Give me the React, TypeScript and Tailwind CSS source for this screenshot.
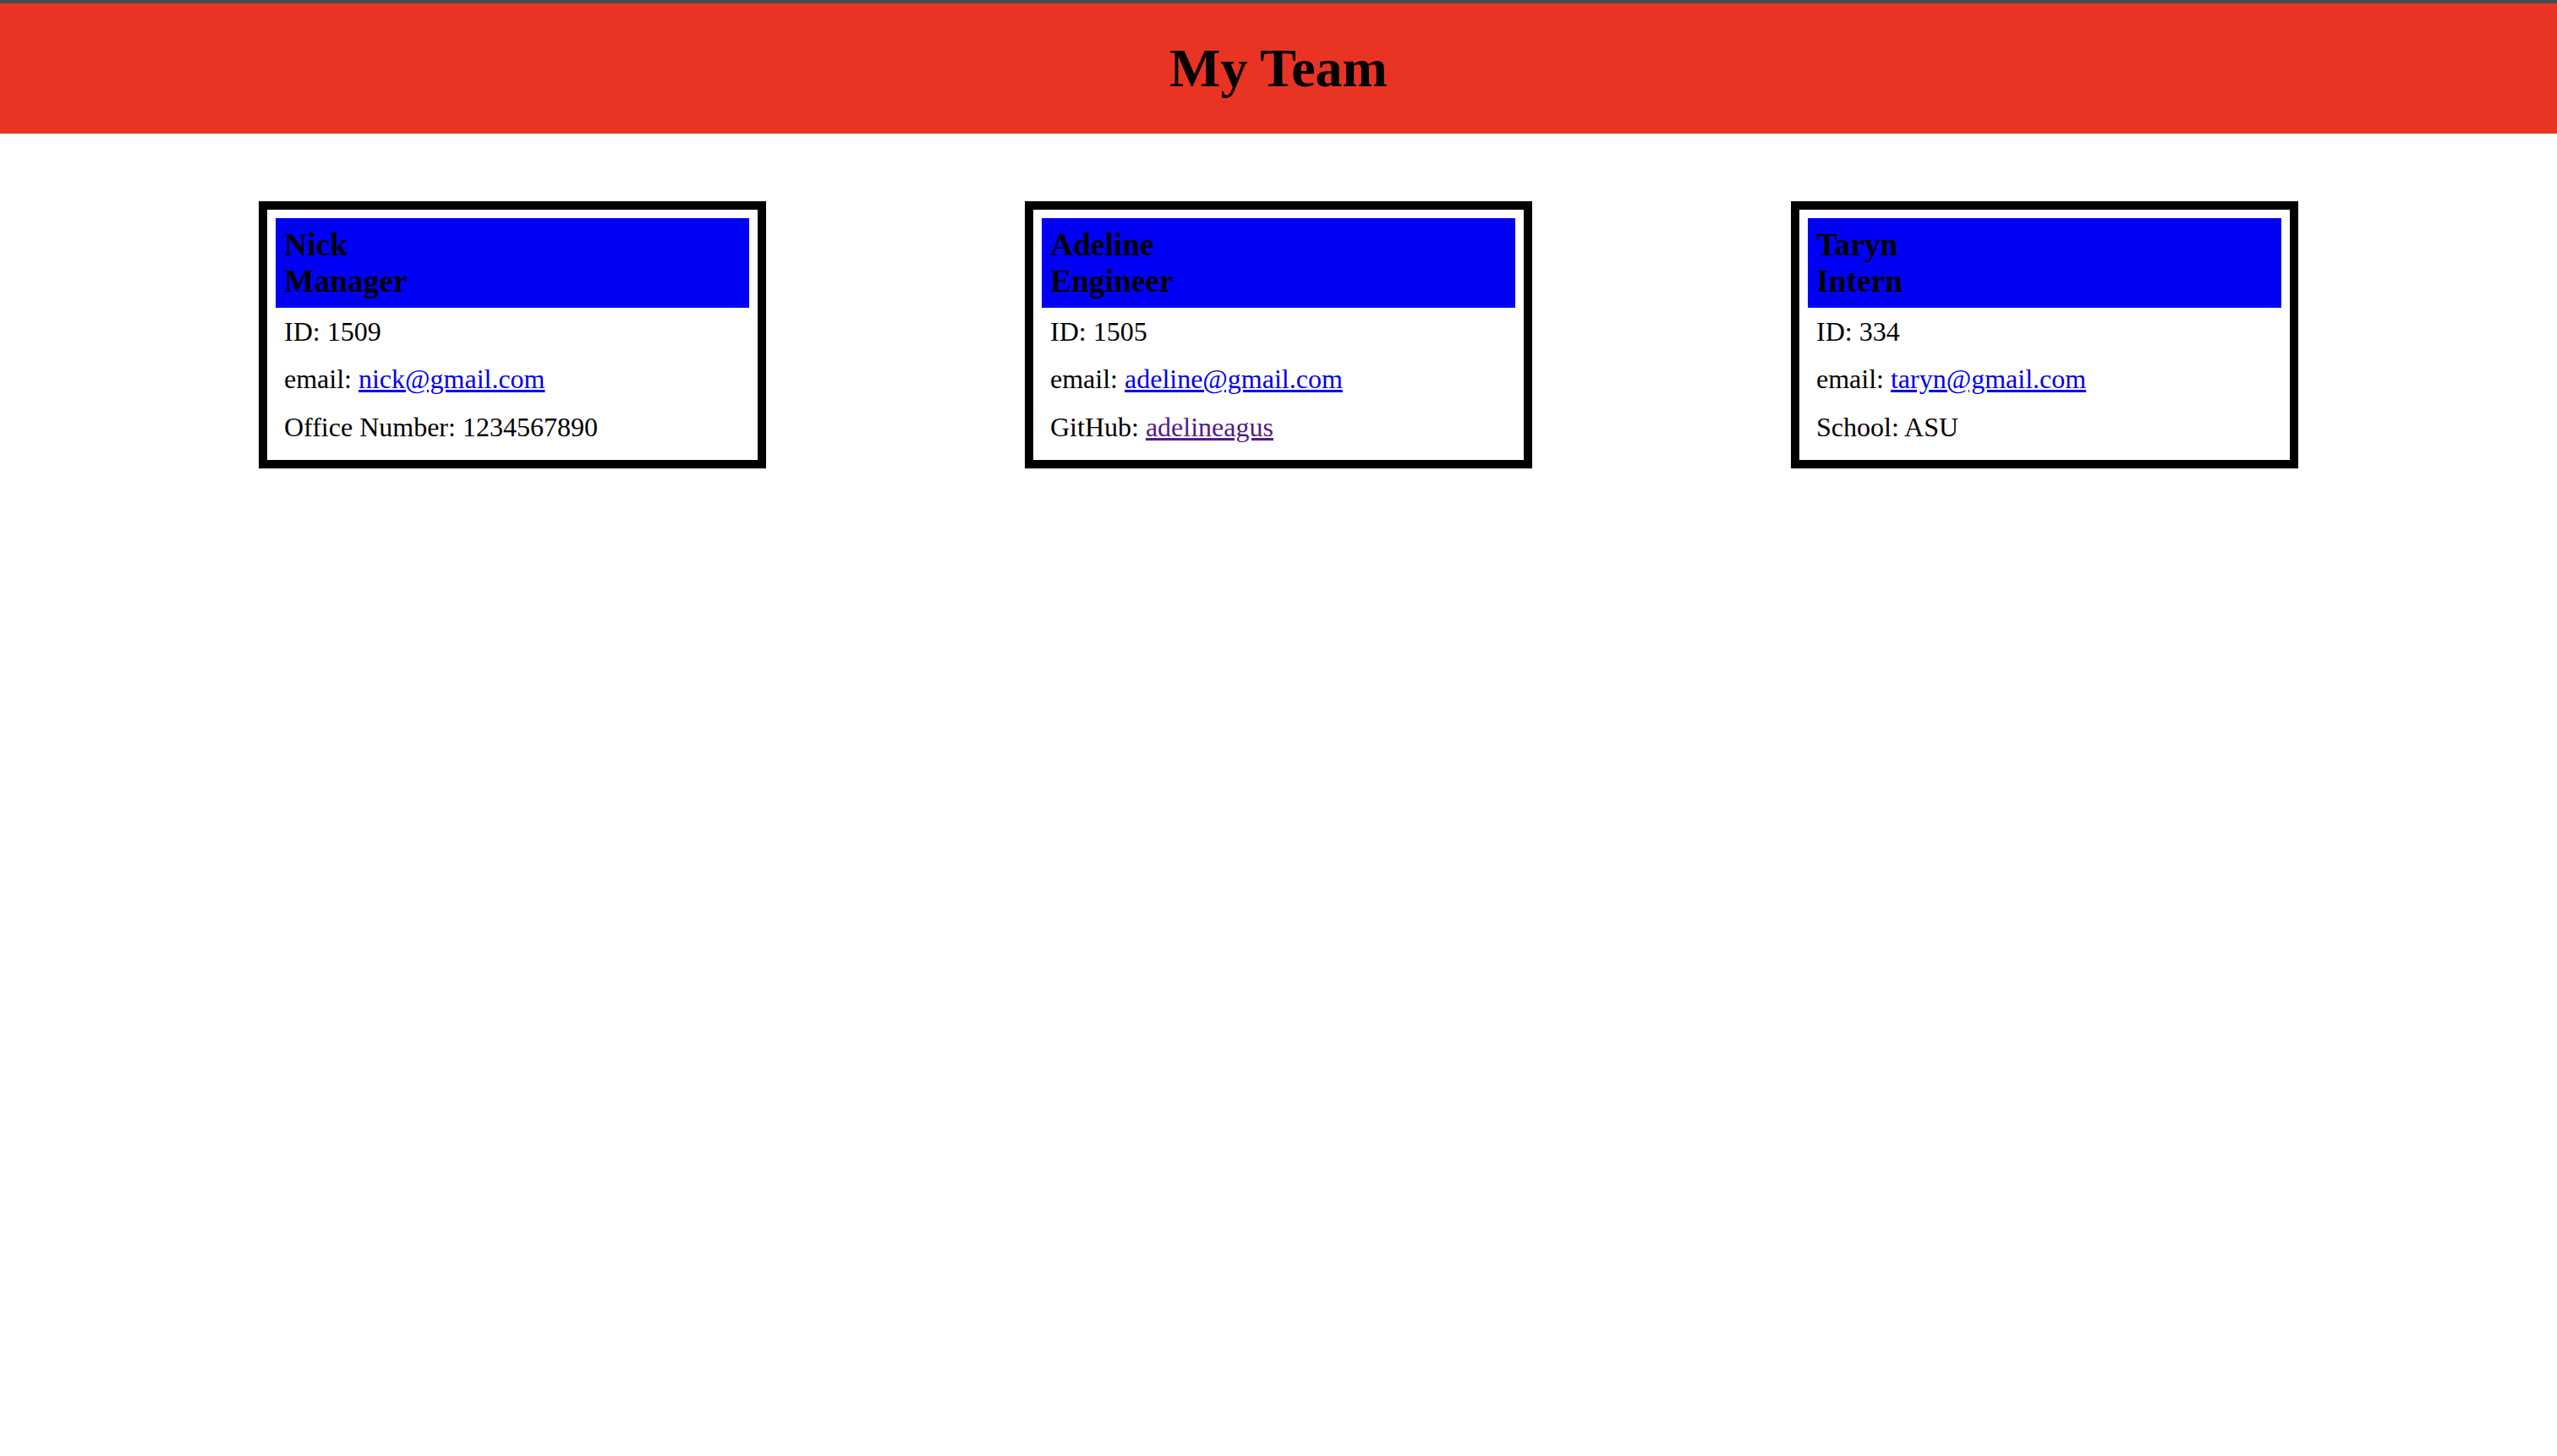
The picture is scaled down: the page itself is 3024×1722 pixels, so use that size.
const team = [
  {
    name: 'Nick',
    role: 'Manager',
    id: '1509',
    email: 'nick@gmail.com',
    extra: { label: 'Office Number', value: '1234567890' },
  },
  {
    name: 'Adeline',
    role: 'Engineer',
    id: '1505',
    email: 'adeline@gmail.com',
    extra: { label: 'GitHub', value: 'adelineagus', link: true },
  },
  {
    name: 'Taryn',
    role: 'Intern',
    id: '334',
    email: 'taryn@gmail.com',
    extra: { label: 'School', value: 'ASU' },
  },
];

function EmployeeCard({ member }: { member: (typeof team)[number] }) {
  return (
    <div className="w-[600px] border-[10px] border-black bg-white p-[10px]">
      <div className="bg-[#0000f5] p-[10px] text-[37.44px] font-bold leading-[1.15] text-black">
        <div>{member.name}</div>
        <div>{member.role}</div>
      </div>
      <ul className="text-[32px] leading-[1.15]">
        <li className="p-[10px]">ID: {member.id}</li>
        <li className="p-[10px]">
          email:{' '}
          <a href={`mailto:${member.email}`} className="text-[#0000ee] underline">
            {member.email}
          </a>
        </li>
        <li className="p-[10px]">
          {member.extra.label}:{' '}
          {member.extra.link ? (
            <a href="#" className="text-[#551a8b] underline">
              {member.extra.value}
            </a>
          ) : (
            member.extra.value
          )}
        </li>
      </ul>
    </div>
  );
}

export default function App() {
  return (
    <div className="min-h-screen bg-white font-['Liberation_Serif','Times_New_Roman',serif] text-black">
      <header className="border-t-4 border-[#484b50] bg-[#e93423] pt-[40px] pb-[40px]">
        <h1 className="text-center text-[64px] font-bold leading-[1.15]">My Team</h1>
      </header>
      <main className="mt-[80px] flex justify-evenly">
        {team.map((m) => (
          <EmployeeCard key={m.id} member={m} />
        ))}
      </main>
    </div>
  );
}
